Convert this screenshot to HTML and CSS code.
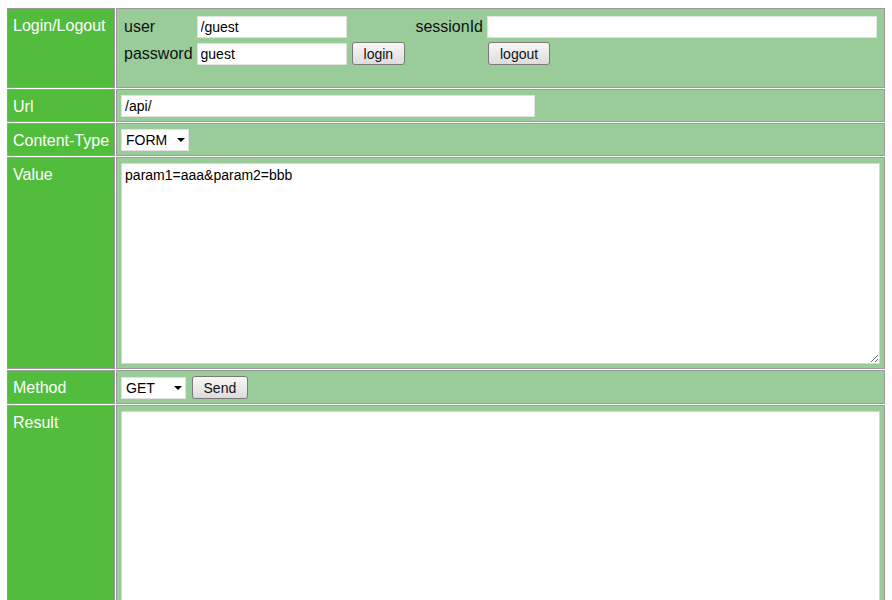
FILE: index.html
```html
<!DOCTYPE html>
<html lang="en">
<head>
    <meta charset="UTF-8">
    <title>API Console</title>
    <link rel="stylesheet" href="styles.css">
</head>
<body>
    <table class="console">
        <tr>
            <td class="label">Login/Logout</td>
            <td class="field login-field">
                <table class="login-table">
                    <tr>
                        <td>user</td>
                        <td><input type="text" class="short" id="user" value="/guest"></td>
                        <td class="btn-col"></td>
                        <td>sessionId</td>
                        <td><input type="text" class="wide" id="sessionId" value=""></td>
                    </tr>
                    <tr>
                        <td>password</td>
                        <td><input type="text" class="short" id="password" value="guest"></td>
                        <td class="btn-col"><button class="btn">login</button></td>
                        <td></td>
                        <td><button class="btn">logout</button></td>
                    </tr>
                </table>
            </td>
        </tr>
        <tr>
            <td class="label">Url</td>
            <td class="field"><input type="text" class="url" id="url" value="/api/"></td>
        </tr>
        <tr>
            <td class="label">Content-Type</td>
            <td class="field">
                <span class="select-wrap">
                    <select class="select content-type">
                        <option>FORM</option>
                        <option>JSON</option>
                    </select>
                </span>
            </td>
        </tr>
        <tr>
            <td class="label">Value</td>
            <td class="field"><textarea class="value-box" id="value">param1=aaa&amp;param2=bbb</textarea></td>
        </tr>
        <tr>
            <td class="label">Method</td>
            <td class="field">
                <span class="select-wrap">
                    <select class="select method">
                        <option>GET</option>
                        <option>POST</option>
                        <option>PUT</option>
                    </select>
                </span>
                <button class="btn send">Send</button>
            </td>
        </tr>
        <tr>
            <td class="label">Result</td>
            <td class="field"><textarea class="result-box" id="result"></textarea></td>
        </tr>
    </table>
</body>
</html>
```

FILE: styles.css
```css
body {
    margin: 6px;
    margin-top: 7px;
    font-family: "Liberation Sans", Arial, sans-serif;
    font-size: 16px;
    color: #111;
    background: #fff;
}

.console {
    width: 100%;
    border-spacing: 1px;
}

.console > tbody > tr > td {
    border: 1px solid #9a9a9a;
    vertical-align: top;
}

.label {
    width: 1%;
    white-space: nowrap;
    background: #52bc3c;
    color: #fff;
    padding: 6px 5px 4px 5px;
    line-height: 21px;
}

.field {
    background: #99cc99;
    padding: 5px 4px 4px 4px;
}

.login-field {
    padding-top: 4px;
    padding-bottom: 19px;
}

.login-table {
    border-spacing: 2px;
}

.login-table td {
    padding: 1px;
    white-space: nowrap;
    vertical-align: middle;
}

.login-table .btn-col {
    width: 61px;
}

input[type="text"] {
    box-sizing: border-box;
    height: 22px;
    border: 1px solid #e2e2e2;
    background: #fff;
    font-family: "Liberation Sans", Arial, sans-serif;
    font-size: 14px;
    padding: 1px 3px;
    margin: 0;
    vertical-align: middle;
}

.short {
    width: 150px;
}

.wide {
    width: 390px;
}

.url {
    width: 414px;
}

.btn {
    box-sizing: border-box;
    height: 23px;
    font-family: "Liberation Sans", Arial, sans-serif;
    font-size: 14px;
    color: #111;
    padding: 1px 11px;
    margin: 0 0 0 1px;
    border: 1px solid #7a7a7a;
    border-radius: 3px;
    background: linear-gradient(#f7f7f7, #dcdcdc);
    vertical-align: middle;
}

.send {
    margin-left: 1px;
}

.select-wrap {
    position: relative;
    display: inline-block;
    vertical-align: middle;
}

.select-wrap::after {
    content: "";
    position: absolute;
    right: 4px;
    top: 9px;
    border-top: 4px solid #000;
    border-left: 4px solid transparent;
    border-right: 4px solid transparent;
    pointer-events: none;
}

.select {
    -webkit-appearance: none;
    appearance: none;
    box-sizing: border-box;
    height: 22px;
    border: 1px solid #e2e2e2;
    border-radius: 0;
    background: #fff;
    font-family: "Liberation Sans", Arial, sans-serif;
    font-size: 14px;
    color: #000;
    padding: 1px 4px;
    margin: 0;
    display: block;
}

.content-type {
    width: 68px;
}

.method {
    width: 65px;
}

textarea {
    box-sizing: border-box;
    display: block;
    width: 100%;
    margin: 0;
    border: 1px solid #d6d6d6;
    background: #fff;
    font-family: "Liberation Sans", Arial, sans-serif;
    font-size: 14px;
    padding: 3px;
}

.value-box {
    height: 201px;
}

.result-box {
    height: 300px;
}
```
